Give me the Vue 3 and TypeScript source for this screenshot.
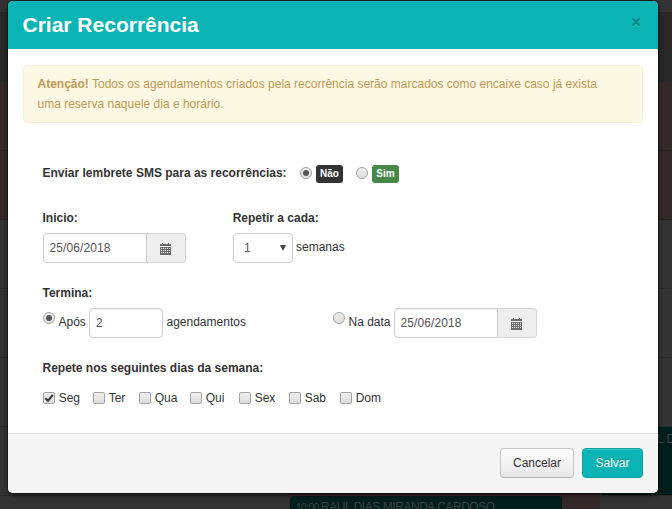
<script setup lang="ts">
import { ref } from 'vue'

interface Weekday {
  label: string
  checked: boolean
  size: string
}

const sms = ref<'nao' | 'sim'>('nao')
const ends = ref<'count' | 'date'>('count')
const startDate = ref('25/06/2018')
const endDate = ref('25/06/2018')
const count = ref('2')
const days = ref<Weekday[]>([
  { label: 'Seg', checked: true, size: 'd50' },
  { label: 'Ter', checked: false, size: 'd46' },
  { label: 'Qua', checked: false, size: 'd51' },
  { label: 'Qui', checked: false, size: 'd49' },
  { label: 'Sex', checked: false, size: 'd50' },
  { label: 'Sab', checked: false, size: 'd51' },
  { label: 'Dom', checked: false, size: 'd50' },
])
</script>

<template>
  <div class="page">
    <div class="agenda">
      <div class="band top"></div>
      <div class="band dark"></div>
      <div class="band blocked"></div>
      <div class="band free"></div>
    </div>
    <div class="column-strip"></div>
    <div class="event side">L D</div>
    <div class="event bottom"><small>10:00</small><span>RAUL DIAS MIRANDA CARDOSO</span></div>

    <div class="modal">
      <header class="head">
        <h3>Criar Recorrência</h3>
        <button class="close" aria-label="Fechar">
          <svg width="11" height="11" viewBox="0 0 11 11">
            <path class="glow" d="M1.4 2.4 8.8 9.6M8.8 2.4 1.4 9.6" />
            <path d="M1.4 1.4 8.8 8.6M8.8 1.4 1.4 8.6" />
          </svg>
        </button>
      </header>

      <div class="body">
        <div class="alert">
          <p><strong>Atenção!</strong> Todos os agendamentos criados pela recorrência serão marcados como encaixe caso já exista</p>
          <p>uma reserva naquele dia e horário.</p>
        </div>

        <div class="form">
          <div class="sms">
            <b class="question">Enviar lembrete SMS para as recorrências:</b>
            <span class="radio" :class="{ on: sms === 'nao' }" @click="sms = 'nao'"></span>
            <span class="tag black">Não</span>
            <span class="radio second" :class="{ on: sms === 'sim' }" @click="sms = 'sim'"></span>
            <span class="tag green">Sim</span>
          </div>

          <div class="pair labels">
            <b class="cell">Inicio:</b>
            <b>Repetir a cada:</b>
          </div>
          <div class="pair fields">
            <div class="cell">
              <div class="date">
                <input v-model="startDate" />
                <span class="addon">
                  <svg width="11" height="12" viewBox="0 0 11 12" shape-rendering="crispEdges">
                    <path fill="#6b6b6b" d="M2 0h1v1h5V0h1v1h2v2H0V1h2zM0 4h11v8H0z" />
                    <path fill="#eee" d="M1 5h1v1H1zm2 0h1v1H3zm2 0h1v1H5zm2 0h1v1H7zm2 0h1v1H9zM1 7h1v1H1zm2 0h1v1H3zm2 0h1v1H5zm2 0h1v1H7zm2 0h1v1H9zM1 9h1v1H1zm2 0h1v1H3zm2 0h1v1H5zm2 0h1v1H7zm2 0h1v1H9z" />
                  </svg>
                </span>
              </div>
            </div>
            <div class="select">1<svg width="6" height="6" viewBox="0 0 6 6"><path d="M0 0h6L3 6z" fill="#444" /></svg></div>
            <span class="unit">semanas</span>
          </div>

          <div class="ends-label"><b>Termina:</b></div>
          <div class="pair ends">
            <div class="ends-count">
              <span class="radio" :class="{ on: ends === 'count' }" @click="ends = 'count'"></span>
              <span class="text apos">Após</span>
              <input v-model="count" class="count" />
              <span class="text">agendamentos</span>
            </div>
            <span class="radio" :class="{ on: ends === 'date' }" @click="ends = 'date'"></span>
            <span class="text on-date">Na data</span>
            <div class="date">
              <input v-model="endDate" />
              <span class="addon">
                <svg width="11" height="12" viewBox="0 0 11 12" shape-rendering="crispEdges">
                  <path fill="#6b6b6b" d="M2 0h1v1h5V0h1v1h2v2H0V1h2zM0 4h11v8H0z" />
                  <path fill="#eee" d="M1 5h1v1H1zm2 0h1v1H3zm2 0h1v1H5zm2 0h1v1H7zm2 0h1v1H9zM1 7h1v1H1zm2 0h1v1H3zm2 0h1v1H5zm2 0h1v1H7zm2 0h1v1H9zM1 9h1v1H1zm2 0h1v1H3zm2 0h1v1H5zm2 0h1v1H7zm2 0h1v1H9z" />
                </svg>
              </span>
            </div>
          </div>

          <div class="days-label"><b>Repete nos seguintes dias da semana:</b></div>
          <div class="days">
            <label v-for="day in days" :key="day.label" :class="day.size" @click="day.checked = !day.checked">
              <span class="check"><svg v-if="day.checked" width="10" height="10" viewBox="0 0 10 10"><path d="M1.4 5.2 4 7.8 8.8 1.8" /></svg></span>
              {{ day.label }}
            </label>
          </div>
        </div>
      </div>

      <footer class="foot">
        <button class="btn cancel">Cancelar</button>
        <button class="btn save">Salvar</button>
      </footer>
    </div>
  </div>
</template>

<style>
body { margin: 0; overflow: hidden; }
</style>

<style scoped>
* { box-sizing: border-box; }
.page { position: relative; width: 672px; height: 509px; overflow: hidden; background: #333; font: 12px/20px "Liberation Sans", Arial, sans-serif; color: #333; }
.agenda { display: flex; flex-direction: column; height: 509px; }
.top { height: 12px; background: #333; }
.dark { height: 70px; background: #282828; }
.blocked { height: 138px; background: repeating-linear-gradient(#342929 0 68px, #292424 68px 69px); }
.free { flex: 1; background: repeating-linear-gradient(#333 0 68px, #292929 68px 69px); }
.column-strip { position: absolute; left: 289px; top: 490px; width: 311px; height: 19px; background: #342929; }
.event { position: absolute; background: #001f1c; color: #3d4242; white-space: nowrap; }
.side { left: 600px; top: 427px; width: 80px; height: 68px; padding: 2px 0 0 57px; border-radius: 4px; }
.bottom { left: 290px; top: 496px; width: 272px; height: 20px; padding-left: 6px; border-radius: 4px; display: flex; gap: 3px; line-height: 23px; }
.bottom small { width: 22px; font-size: 10px; letter-spacing: -.5px; }
.bottom span { letter-spacing: -.45px; }
.modal { position: absolute; left: 8px; top: 1px; width: 650px; height: 492px; display: flex; flex-direction: column; background: #fff; border-radius: 5px; overflow: hidden; box-shadow: 0 2px 5px rgba(0, 0, 0, .6), 0 0 0 1px rgba(0, 0, 0, .3); }
.head { height: 48px; flex: none; display: flex; justify-content: space-between; align-items: flex-start; background: #0bb4b4; padding: 0 16px 0 14.5px; }
h3 { margin: 0; font-size: 21px; line-height: 48px; color: #fff; }
.close { border: 0; padding: 0; margin-top: 16px; width: 11px; height: 11px; background: none; display: flex; }
.close svg { fill: none; stroke: #098c8c; stroke-width: 2.6; }
.close .glow { stroke: #3cc3c3; }
.body { flex: 1; padding: 16px 15px 0; }
.alert { height: 58px; padding: 8px 14px 8px 13.5px; border: 1px solid #fbeed5; border-radius: 4px; background: #fcf8e3; color: #c09853; }
p { margin: 0; white-space: nowrap; }
.form { padding-left: 20px; }
.form b { margin-left: -.5px; }
.sms { display: flex; align-items: center; height: 20px; margin-top: 40px; }
.question { width: 257.5px; flex: none; white-space: nowrap; }
.radio { flex: none; width: 12px; height: 12px; border: 1px solid #a3a3a3; border-radius: 50%; background: linear-gradient(#eee, #ddd); display: flex; align-items: center; justify-content: center; }
.radio.on::after { content: ""; width: 6px; height: 6px; border-radius: 50%; background: #555; }
.tag { width: 27px; height: 18px; margin-left: 4px; border-radius: 3px; color: #fff; font-size: 10px; font-weight: bold; line-height: 18px; text-align: center; position: relative; top: 1px; }
.black { background: #333; }
.green { background: #468847; }
.second { margin-left: 13px; }
.pair { display: flex; }
.cell { width: 190px; flex: none; }
.labels { margin-top: 25px; height: 20px; }
.labels .cell { width: 190.7px; }
.fields { margin-top: 5px; height: 30px; }
.date { display: flex; width: 143px; height: 30px; }
input { font: 12px/20px "Liberation Sans", Arial, sans-serif; letter-spacing: .1px; color: #555; width: 104px; height: 30px; margin: 0; padding: 0 5.5px; border: 1px solid #ccc; border-radius: 4px 0 0 4px; background: #fff; outline: 0; box-shadow: inset 0 1px 1px rgba(0, 0, 0, .06); }
.count { padding-left: 6px; }
.addon { width: 39px; border: 1px solid #d5d5d5; border-left: 0; border-radius: 0 4px 4px 0; background: #eee; padding: 9px 0 0 13px; line-height: 0; }
.select { display: flex; justify-content: space-between; align-items: center; width: 60px; height: 30px; padding: 0 6px 0 10px; border: 1px solid #ccc; border-radius: 4px; color: #555; }
.unit { margin: 4px 0 0 3px; }
.ends-label { margin-top: 20px; height: 20px; }
.ends { margin-top: 5px; height: 30px; }
.ends-count { display: flex; width: 290px; }
.ends .radio { margin-top: 4px; }
.text { margin: 4px 0 0 3.5px; }
.apos { width: 30.5px; }
.count { width: 74px; border-radius: 4px; }
.on-date { width: 45.5px; white-space: nowrap; }
.days-label { margin-top: 20px; height: 20px; }
.days { display: flex; margin-top: 10px; height: 20px; }
label { display: flex; align-items: center; gap: 3.7px; }
.d46 { width: 46px; }
.d49 { width: 49px; }
.d50 { width: 50px; }
.d51 { width: 51px; }
.check { flex: none; width: 12px; height: 12px; border: 1px solid #a3a3a3; border-radius: 2px; background: linear-gradient(#eee, #dcdcdc); display: flex; }
.check svg { fill: none; stroke: #333; stroke-width: 2.1; }
.foot { height: 60px; flex: none; display: flex; justify-content: flex-end; gap: 8px; border-top: 1px solid #ddd; box-shadow: inset 0 1px 0 #fff; background: #f4f4f4; padding: 14px 15px 0; }
.btn { height: 30px; padding: 0; border-radius: 4px; font: 12px/20px "Liberation Sans", Arial, sans-serif; }
.cancel { width: 74px; border: 1px solid #c5c5c5; border-bottom-color: #b3b3b3; color: #333; background: linear-gradient(#fff, #e6e6e6); }
.save { width: 61px; border: 1px solid #0aa3a3; background: #0bb4b4; color: #fff; box-shadow: inset 0 1px 0 rgba(255, 255, 255, .2); text-shadow: 0 -1px 0 rgba(0, 0, 0, .25); }
</style>
